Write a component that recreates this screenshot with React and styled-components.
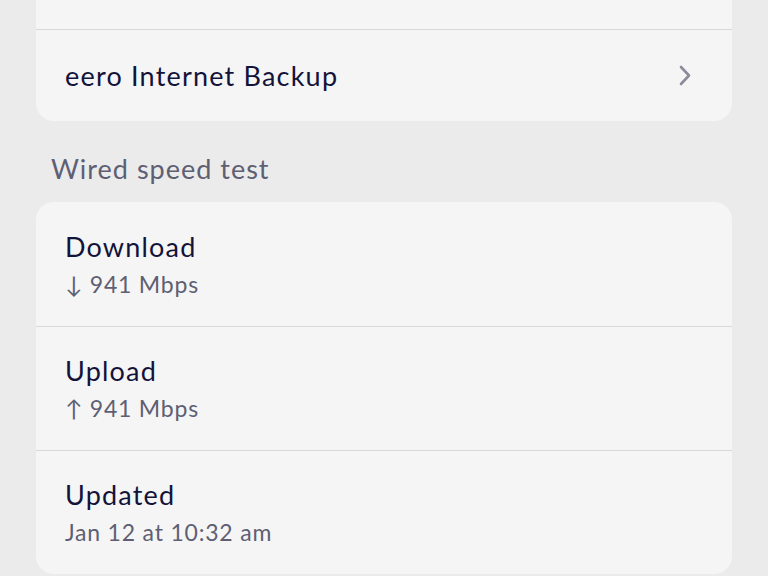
import React from 'react';
import styled, { createGlobalStyle } from 'styled-components';

const GlobalStyle = createGlobalStyle`
  html, body {
    margin: 0;
    padding: 0;
    background: #ebebeb;
    font-family: 'Lato', 'Noto Sans', sans-serif;
    overflow: hidden;
  }
`;

const Page = styled.div`
  display: flex;
  flex-direction: column;
  padding: 0 36px;
  margin-top: -63px;
`;

const Card = styled.div`
  background: #f5f5f5;
  border-radius: 18px;
  overflow: hidden;
`;

const Row = styled.div`
  display: flex;
  align-items: center;
  justify-content: space-between;
  height: ${(p) => p.h}px;
  padding: 0 29px;
  box-sizing: border-box;
  border-top: ${(p) => (p.first ? 'none' : '1px solid #d9d9db')};
`;

const Texts = styled.div`
  display: flex;
  flex-direction: column;
`;

const Title = styled.div`
  font-size: 27px;
  line-height: 34px;
  color: #13133a;
  letter-spacing: 1.2px;
`;

const Sub = styled.div`
  font-size: 23px;
  line-height: 30px;
  margin-top: 5px;
  color: #5e5f73;
  letter-spacing: 0.8px;
`;

const SectionLabel = styled.div`
  font-size: 27px;
  color: #5e5f73;
  padding: 0 15px;
  margin: 31px 0 16px;
  line-height: 34px;
  letter-spacing: 1px;
`;

const Chevron = () => (
  <svg width="16" height="22" viewBox="0 0 16 22" style={{ marginRight: 10 }}>
    <path d="M4 2 L12 10.5 L4 19" fill="none" stroke="#8b8b9b" strokeWidth="2.6" strokeLinecap="round" strokeLinejoin="round" />
  </svg>
);

const speed = [
  { title: 'Download', sub: '↓ 941 Mbps' },
  { title: 'Upload', sub: '↑ 941 Mbps' },
  { title: 'Updated', sub: 'Jan 12 at 10:32 am' },
];

export default function App() {
  return (
    <>
      <GlobalStyle />
      <Page>
        <Card>
          <Row first h={92} />
          <Row h={92}>
            <Title>eero Internet Backup</Title>
            <Chevron />
          </Row>
        </Card>
        <SectionLabel>Wired speed test</SectionLabel>
        <Card>
          {speed.map((s, i) => (
            <Row key={s.title} first={i === 0} h={124}>
              <Texts>
                <Title>{s.title}</Title>
                <Sub>{s.sub}</Sub>
              </Texts>
            </Row>
          ))}
        </Card>
      </Page>
    </>
  );
}
